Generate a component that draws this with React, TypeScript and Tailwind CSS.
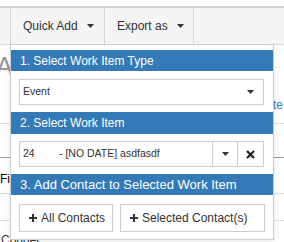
import React from 'react';

const Caret = ({ className = '' }: { className?: string }) => (
  <svg width="7" height="4" viewBox="0 0 7 4" className={className}>
    <polygon points="0,0 7,0 3.5,4" fill="#333" />
  </svg>
);

const Plus = () => (
  <svg width="8" height="8" viewBox="0 0 8 8">
    <path d="M4 0 V8 M0 4 H8" stroke="#333" strokeWidth="2" />
  </svg>
);

const Cross = () => (
  <svg width="9" height="9" viewBox="0 0 9 9">
    <path d="M1 1 L8 8 M8 1 L1 8" stroke="#222" strokeWidth="2.2" />
  </svg>
);

const SectionHeader = ({ title, tall = false, size = 'text-[12px]' }: { title: string; tall?: boolean; size?: string }) => (
  <div className={`${tall ? 'h-[22px]' : 'h-[21px]'} ${size} bg-[#337ab7] text-white flex items-center pl-[9px]`}>
    {title}
  </div>
);

export default function App() {
  return (
    <div className="relative w-[284px] h-[242px] overflow-hidden bg-white text-[#333] text-[12px] font-['Liberation_Sans',Arial,sans-serif]">
      {/* page behind the menu */}
      <div className="h-[6px] bg-white" />
      <div className="h-[2px] bg-[#d2d2d2]" />
      <div className="flex h-[37px] bg-[#f5f5f5] border-b border-[#ddd]">
        <div className="w-[11px] border-r border-[#d6d6d6]" />
        <div className="w-[94px] border-r border-[#d6d6d6] flex items-center pl-[12px]">
          <span>Quick Add</span>
          <Caret className="ml-[9px]" />
        </div>
        <div className="w-[89px] border-r border-[#d6d6d6] flex items-center pl-[12px]">
          <span>Export as</span>
          <Caret className="ml-[9px]" />
        </div>
        <div className="flex-1" />
      </div>

      <div className="h-[79px] border-b border-[#ddd] flex flex-col">
        <div className="mt-[9px] -ml-[4px] text-[25px] leading-none text-[#999]">A</div>
        <div className="mt-[20px] flex justify-end leading-none">
          <span className="text-[#337ab7] mr-[1px]">Update</span>
        </div>
      </div>
      <div className="h-[34px] border-b border-[#999]" />
      <div className="h-[36px] border-b border-[#ddd] pt-[15px] leading-none text-black">First</div>
      <div className="h-[27px] border-b border-[#ddd]" />
      <div className="mt-[13px] pl-[1px] leading-none">Conger</div>

      {/* Quick Add menu */}
      <div className="absolute left-[10px] top-[44px] w-[264px] border border-[#ccc] bg-white pt-[5px] pb-[7px] shadow-[0_4px_8px_rgba(0,0,0,0.08)]">
        <SectionHeader title="1. Select Work Item Type" />
        <div className="mx-[8px] mt-[8px] w-[245px] h-[26px] border border-[#ccc] flex items-center justify-between pl-[3px] pr-[9px] text-[10.5px]">
          <span>Event</span>
          <Caret />
        </div>

        <div className="mt-[7px]">
          <SectionHeader title="2. Select Work Item" tall />
        </div>
        <div className="mx-[8px] mt-[7px] w-[245px] h-[26px] border border-[#ccc] flex text-[10.5px]">
          <div className="flex-1 flex items-center pl-[3px]">
            <span className="w-[36px]">24</span>
            <span>- [NO DATE] asdfasdf</span>
          </div>
          <div className="w-[25px] border-l border-[#ccc] flex items-center justify-center">
            <Caret />
          </div>
          <div className="w-[26px] border-l border-[#ccc] flex items-center justify-center">
            <Cross />
          </div>
        </div>

        <div className="mt-[7px]">
          <SectionHeader title="3. Add Contact to Selected Work Item" size="text-[13px]" />
        </div>
        <div className="mx-[8px] mt-[9px] flex gap-[7px]">
          <button className="w-[94px] h-[28px] border border-[#ccc] bg-white flex items-center gap-[4px] pl-[9px]">
            <Plus />
            <span>All Contacts</span>
          </button>
          <button className="w-[145px] h-[28px] border border-[#ccc] bg-white flex items-center gap-[4px] pl-[9px]">
            <Plus />
            <span>Selected Contact(s)</span>
          </button>
        </div>
      </div>
    </div>
  );
}
